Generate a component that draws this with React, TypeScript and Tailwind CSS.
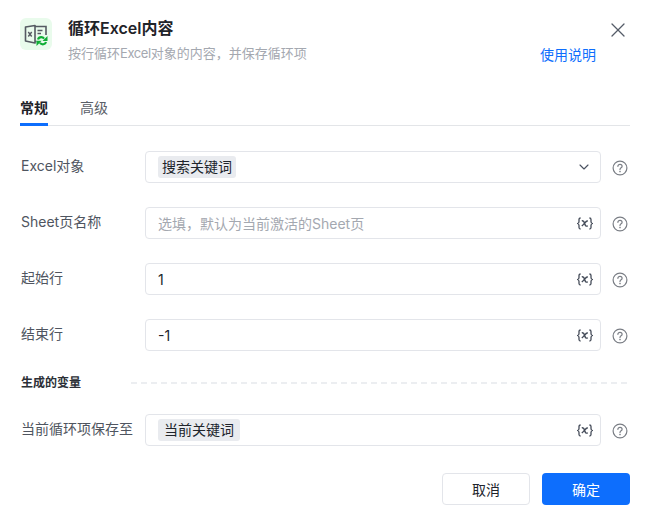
import { ChevronDown, X } from "lucide-react"

const fontFamily = "font-['Inter','Noto_Sans_CJK_SC',sans-serif]"

function HelpIcon() {
  return (
    <svg width="16" height="16" viewBox="0 0 16 16" fill="none" className="shrink-0 text-[#7a7e85]">
      <circle cx="8" cy="8" r="6.9" stroke="currentColor" strokeWidth="1.2" />
      <path
        d="M5.900 6.300c0-1.200.9-2 2.100-2s2.100.8 2.100 1.900c0 .8-.4 1.200-1 1.600-.7.5-1.100.8-1.100 1.600v.2"
        stroke="currentColor"
        strokeWidth="1.200"
        strokeLinecap="round"
      />
      <circle cx="8" cy="11.600" r=".8" fill="currentColor" />
    </svg>
  )
}

function VarIcon() {
  return (
    <svg width="16" height="13" viewBox="0 0 16 13" fill="none" className="shrink-0 text-[#454c59]">
      <path
        d="M3.600 1C2.300 1 2 1.500 2 2.500v2C2 5.500 1.600 6.200.6 6.500c1 .3 1.400 1 1.400 2v2c0 1 .3 1.500 1.600 1.500M12.400 1c1.300 0 1.600.5 1.600 1.500v2c0 1 .4 1.700 1.400 2-1 .3-1.400 1-1.400 2v2c0 1-.3 1.500-1.600 1.500"
        stroke="currentColor"
        strokeWidth="1.300"
      />
      <path d="M4.800 3.800c1.700-.4 2.200.2 2.800 2.500.6 2.400 1.200 3.200 3.200 2.600M10.800 3.800C8.600 4.100 7.200 7 4.800 9" stroke="currentColor" strokeWidth="1.400" />
    </svg>
  )
}

function LogoIcon() {
  return (
    <div className="flex h-8 w-8 shrink-0 items-center justify-center rounded-md bg-[#e9fbec]">
      <svg width="24" height="24" viewBox="0 0 24 24" fill="none">
        <path d="M11 3.500 1.500 5v14l9.500 2z" stroke="#555a62" strokeWidth="1.600" strokeLinejoin="round" />
        <path d="M11 4.500h11V13M11 19.500h1.500" stroke="#555a62" strokeWidth="1.600" />
        <path d="m4.300 10 3.400 4.500M7.700 10l-3.400 4.500" stroke="#555a62" strokeWidth="1.400" />
        <path d="M13.500 8.500h5M13.500 11.500h3.500" stroke="#555a62" strokeWidth="1.400" />
        <path d="M14 17.500c.5-1.500 1.800-2.300 3.200-2.300 1.200 0 2.200.5 2.900 1.400" stroke="#0fae35" strokeWidth="2.200" />
        <path d="M23.500 14v5h-5z" fill="#0fae35" />
        <path d="M22 20c-.5 1.500-1.800 2.300-3.200 2.300-1.200 0-2.200-.5-2.900-1.400" stroke="#0fae35" strokeWidth="2.200" />
        <path d="M12.500 24v-5.200h5.200z" fill="#0fae35" />
      </svg>
    </div>
  )
}

function Tag({ children, narrow }: { children: React.ReactNode; narrow?: boolean }) {
  return (
    <span className={`rounded-[3px] bg-[#e9ebef] text-[14px] leading-[22px] text-[#20242b] ${narrow ? "px-1" : "px-[6px]"}`}>
      {children}
    </span>
  )
}

function Row({ label, children, end }: { label: string; children: React.ReactNode; end: React.ReactNode }) {
  return (
    <div className="flex items-center pl-[1px]">
      <div className="w-[124px] shrink-0 pb-[3px] text-[14px] leading-[22px] text-[#4f5560]">{label}</div>
      <div className="flex h-8 w-[456px] items-center justify-between rounded-[4px] border border-[#e3e5ea] bg-white pl-3 pr-[7px]">
        <div className="flex items-center text-[14px]">{children}</div>
        {end}
      </div>
      <div className="ml-[11px] mt-[2px]">
        <HelpIcon />
      </div>
    </div>
  )
}

export default function App() {
  return (
    <div className={`${fontFamily} h-[524px] w-[651px] bg-white pl-5 pr-[21px] pt-[18px]`}>
      <div className="flex">
        <LogoIcon />
        <div className="ml-4 flex-1">
          <div className="text-[16px] font-semibold leading-[20px] text-[#1f2329]">循环Excel内容</div>
          <div className="mt-[5px] text-[13px] leading-[20px] text-[#a4a8b0]">
            按行循环<span className="tracking-[-0.4px]">Excel</span>对象的内容，并保存循环项
          </div>
        </div>
        <div className="flex flex-col items-end">
          <X size={24} strokeWidth={1.300} className="text-[#555c68]" />
          <a className="mr-[34px] mt-[3px] text-[14px] leading-[20px] text-[#0d6efd]">使用说明</a>
        </div>
      </div>

      <div className="mt-[33px] flex h-[28px] gap-8 border-b border-[#e3e5e8] text-[14px] leading-[20px]">
        <div className="h-[28px] border-b-[3px] border-[#0d6efd] font-semibold text-[#1f2329]">常规</div>
        <div className="text-[#5b6068]">高级</div>
      </div>

      <div className="mt-[25px] flex flex-col gap-6">
        <Row label="Excel对象" end={<ChevronDown size={16} strokeWidth={1.700} className="mr-[1px] text-[#4a5260]" />}>
          <Tag narrow>搜索关键词</Tag>
        </Row>
        <Row label="Sheet页名称" end={<VarIcon />}>
          <span className="text-[#a4a8b0]">选填，默认为当前激活的Sheet页</span>
        </Row>
        <Row label="起始行" end={<VarIcon />}>
          <span className="text-[#20242b]">1</span>
        </Row>
        <Row label="结束行" end={<VarIcon />}>
          <span className="text-[#20242b]">-1</span>
        </Row>
      </div>

      <div className="mt-[21px] flex items-center pl-[1px]">
        <div className="w-[110px] text-[12px] font-semibold leading-[22px] text-[#2b2f36]">生成的变量</div>
        <div className="mr-[3px] flex-1 border-t-2 border-dashed border-[#eceef1]" />
      </div>

      <div className="mt-[20px]">
        <Row label="当前循环项保存至" end={<VarIcon />}>
          <Tag>当前关键词</Tag>
        </Row>
      </div>

      <div className="mt-[27px] flex justify-end gap-3">
        <button className="h-8 w-[88px] rounded-[4px] border border-[#e3e5ea] bg-white text-[14px] text-[#20242b]">取消</button>
        <button className="h-8 w-[88px] rounded-[4px] bg-[#0d6efd] text-[14px] text-white">确定</button>
      </div>
    </div>
  )
}
